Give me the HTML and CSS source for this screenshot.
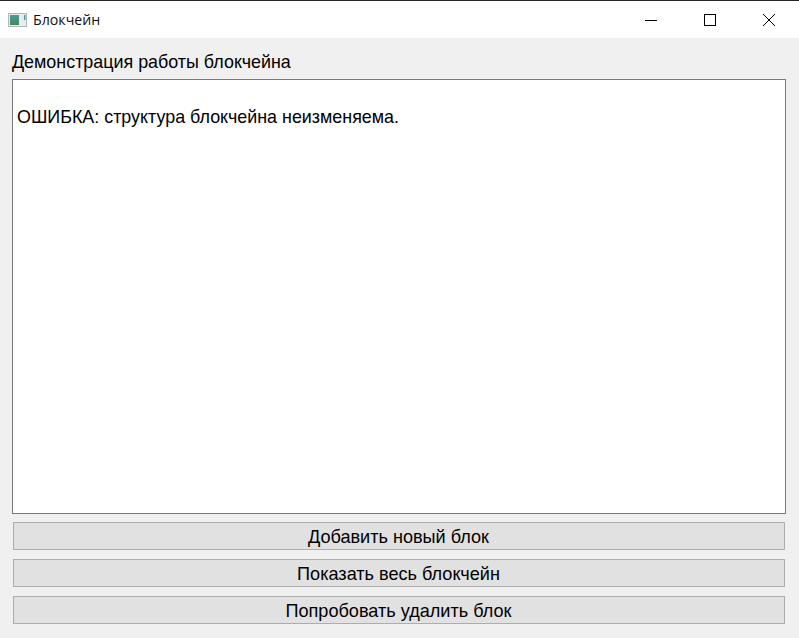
FILE: index.html
```html
<!DOCTYPE html>
<html lang="ru">
<head>
    <meta charset="UTF-8">
    <title>Блокчейн</title>
    <link rel="stylesheet" href="styles.css">
</head>
<body>
    <div class="window">
        <!-- Title bar -->
        <div class="titlebar">
            <svg class="app-icon" width="19" height="14" viewBox="0 0 19 14">
                <defs>
                    <linearGradient id="pane" x1="0" y1="0" x2="0" y2="1">
                        <stop offset="0" stop-color="#4f9a9a"/>
                        <stop offset="1" stop-color="#3f8a5f"/>
                    </linearGradient>
                </defs>
                <rect x="0.5" y="0.5" width="18" height="13" fill="#e6ebee" stroke="#b4b8bd"/>
                <rect x="2" y="2" width="9" height="10" fill="url(#pane)"/>
                <rect x="16" y="2" width="1.5" height="5" fill="#5b9a9a"/>
            </svg>
            <span class="title">Блокчейн</span>
            <div class="win-controls">
                <div class="win-btn">
                    <svg width="12" height="12" viewBox="0 0 12 12"><path d="M0 6.5H12" stroke="#000" fill="none"/></svg>
                </div>
                <div class="win-btn">
                    <svg width="12" height="12" viewBox="0 0 12 12"><rect x="0.5" y="0.5" width="11" height="11" stroke="#000" fill="none"/></svg>
                </div>
                <div class="win-btn">
                    <svg width="12" height="12" viewBox="0 0 12 12"><path d="M0 0L12 12M12 0L0 12" stroke="#000" fill="none"/></svg>
                </div>
            </div>
        </div>

        <!-- Main content -->
        <div class="content">
            <div class="heading">Демонстрация работы блокчейна</div>
            <div class="output">
                <p>ОШИБКА: структура блокчейна неизменяема.</p>
            </div>
            <div class="actions">
                <button class="btn">Добавить новый блок</button>
                <button class="btn">Показать весь блокчейн</button>
                <button class="btn">Попробовать удалить блок</button>
            </div>
        </div>
    </div>
</body>
</html>
```

FILE: styles.css
```css
* {
    margin: 0;
    padding: 0;
    box-sizing: border-box;
}

body {
    width: 799px;
    height: 638px;
    overflow: hidden;
    background: #f0f0f0;
    font-family: 'Liberation Sans', Arial, sans-serif;
    color: #000;
}

.window {
    height: 638px;
    display: flex;
    flex-direction: column;
    border-top: 1px solid #262626;
}

/* Title bar */
.titlebar {
    height: 37px;
    background: #fff;
    display: flex;
    align-items: center;
    padding-left: 8px;
}

.app-icon {
    margin-right: 6px;
}

.title {
    font-family: 'Open Sans', sans-serif;
    font-size: 14.2px;
    color: #111;
}

.win-controls {
    margin-left: auto;
    display: flex;
    margin-right: 1px;
}

.win-btn {
    width: 59px;
    height: 37px;
    display: flex;
    align-items: center;
    justify-content: center;
}

/* Content */
.content {
    flex: 1;
    display: flex;
    flex-direction: column;
    padding: 15px 13px 14px 12px;
}

.heading {
    font-size: 17.9px;
    line-height: 19px;
    height: 26px;
}

.output {
    height: 435px;
    background: #fff;
    border: 1px solid #7a7a7a;
    padding: 28px 4px 0 4px;
    font-size: 17.9px;
    line-height: 19px;
}

.actions {
    display: flex;
    flex-direction: column;
    gap: 9px;
    margin-top: 8px;
    padding: 0 0 0 1px;
}

.btn {
    height: 28px;
    width: 772px;
    padding: 2px 1px 0 0;
    background: #e1e1e1;
    border: 1px solid #adadad;
    font-family: 'Liberation Sans', Arial, sans-serif;
    font-size: 18.1px;
    color: #000;
}
```
